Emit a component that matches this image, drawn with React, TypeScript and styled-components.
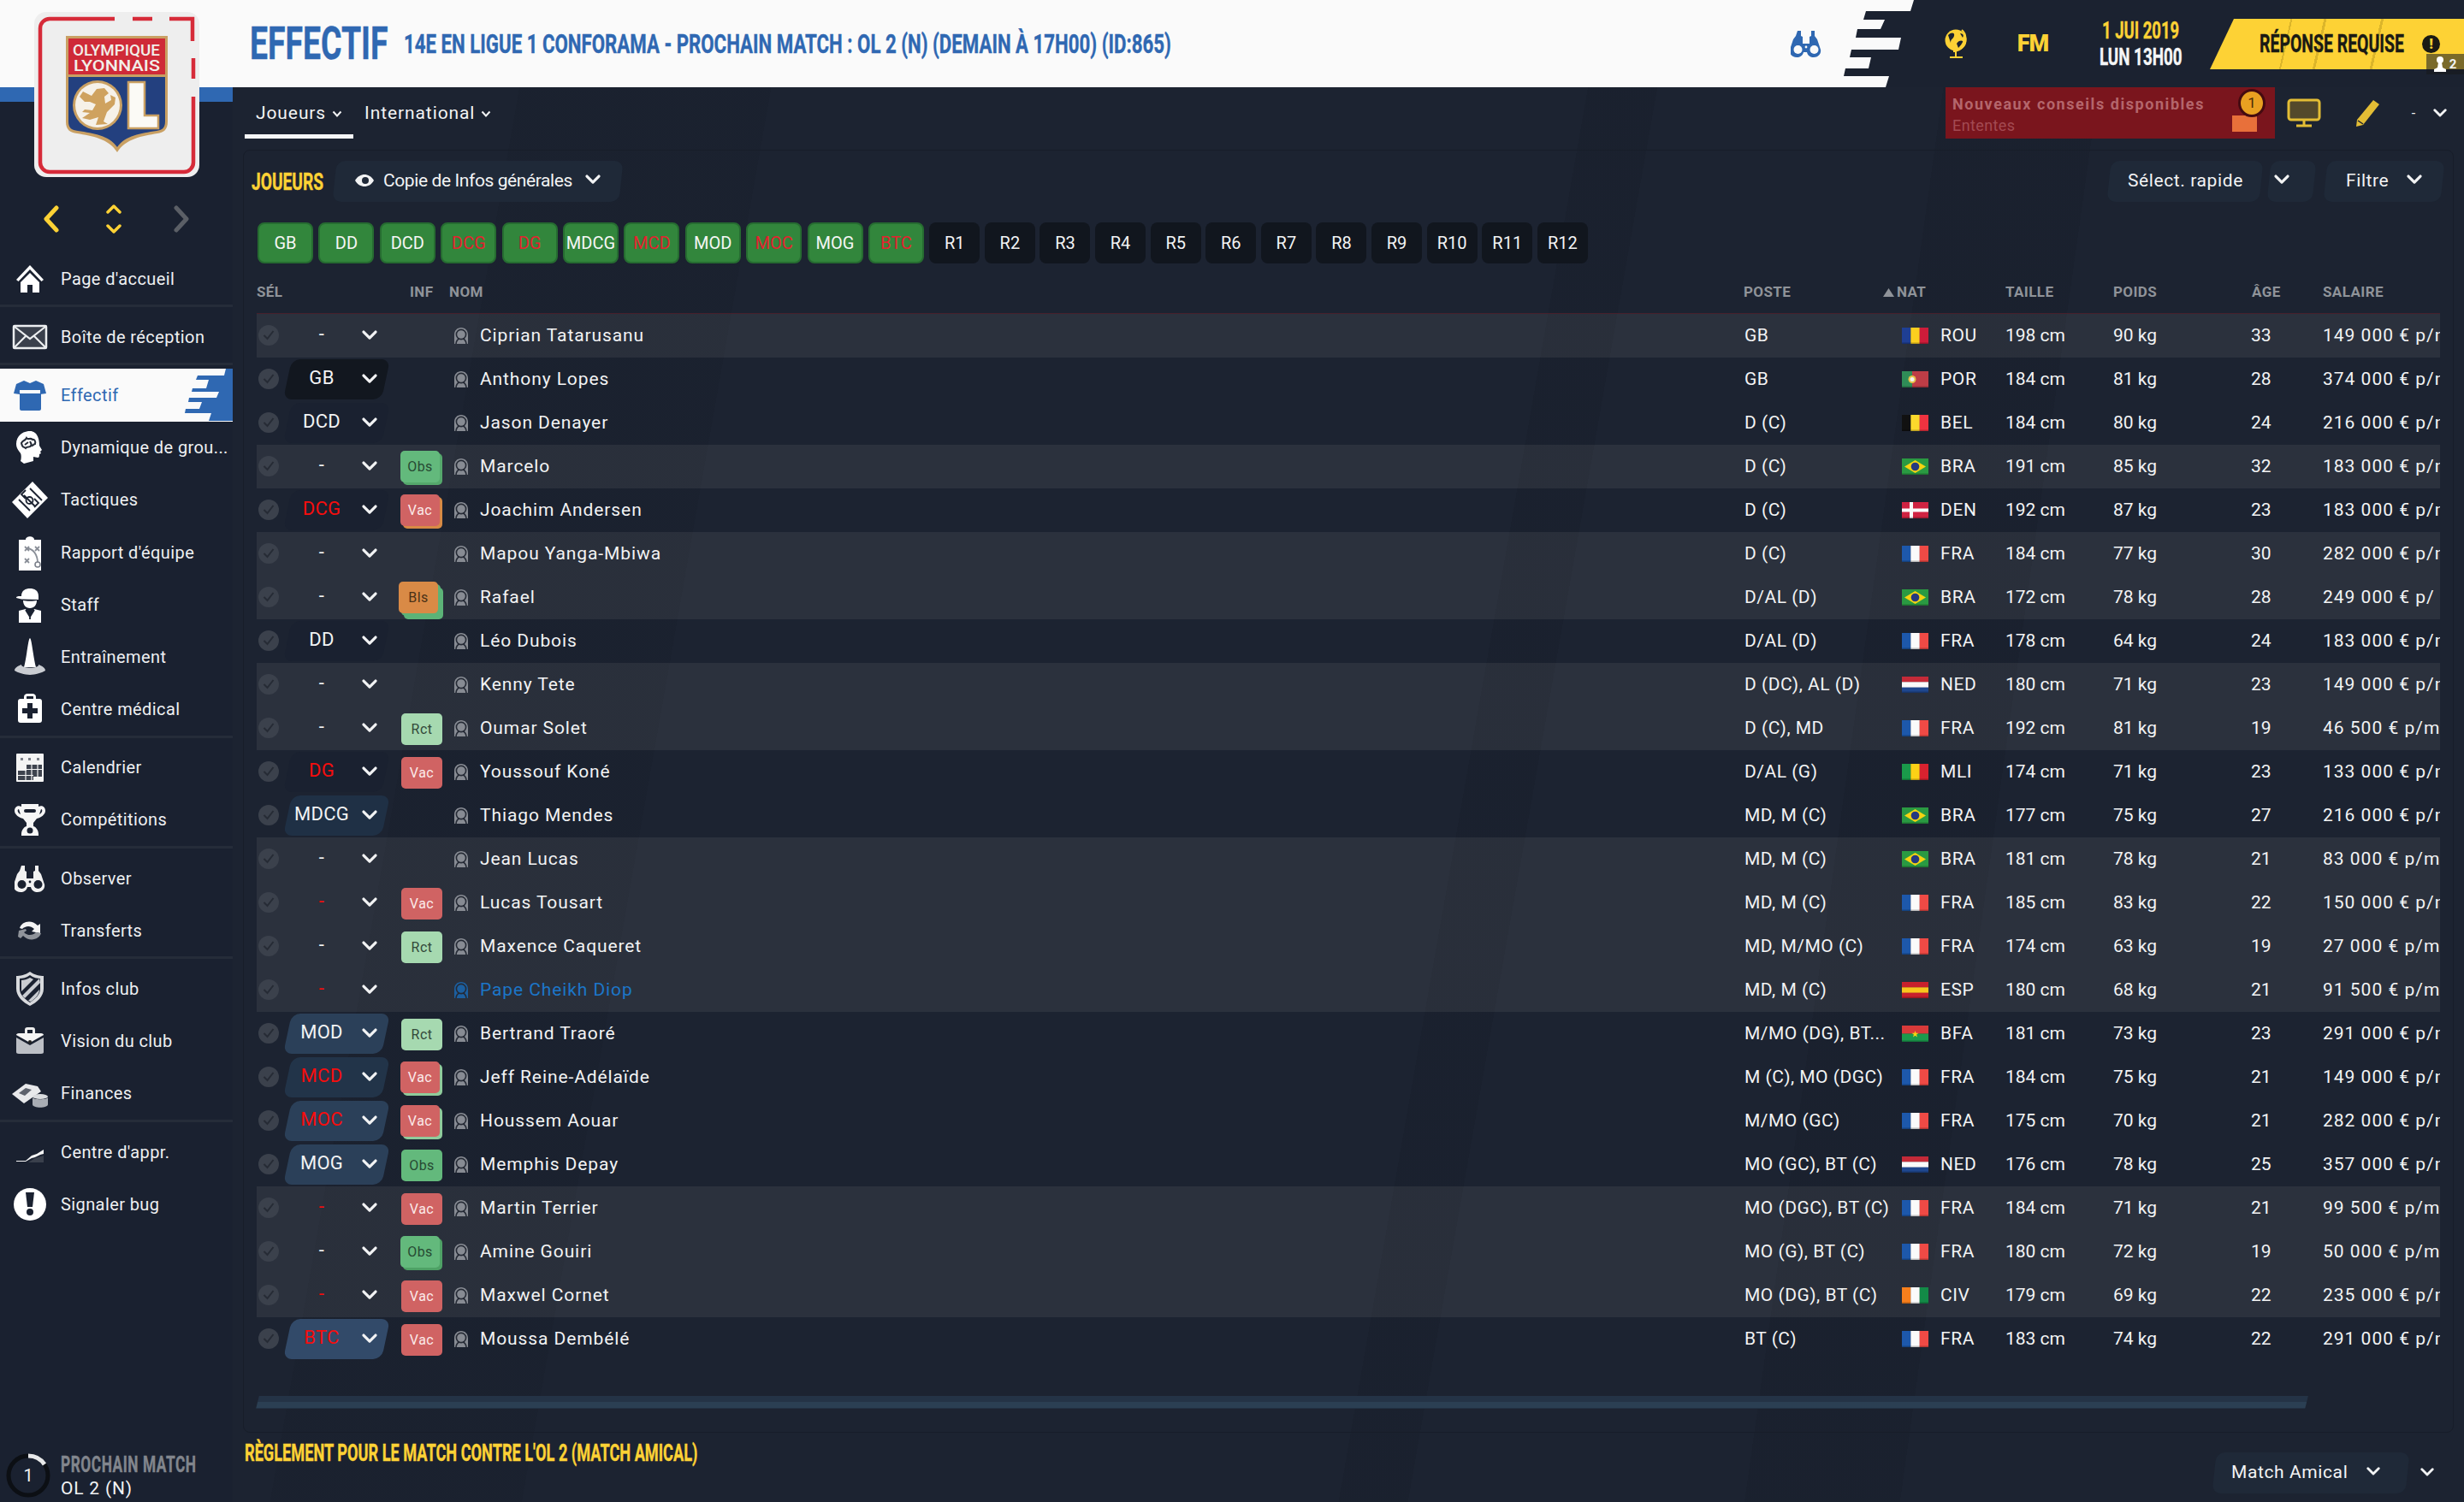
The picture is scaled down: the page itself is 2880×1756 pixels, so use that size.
import React from "react";
import styled, { createGlobalStyle, css } from "styled-components";

const GlobalStyle = createGlobalStyle`
  html, body { margin: 0; padding: 0; background: #1b2230; }
  body { font-family: Roboto, "Liberation Sans", sans-serif; color: #f2f3f4; }
  * { box-sizing: border-box; }
`;

type Player = {
  sel: string;
  selRed?: boolean;
  pill?: string;
  badge?: "Obs" | "Vac" | "Rct" | "Bls";
  stack?: string;
  name: string;
  poste: string;
  flag: string;
  code: string;
  taille: string;
  poids: string;
  age: string;
  salaire: string;
  light?: boolean;
  link?: boolean;
};

const faint = "#1a2130";
const players: Player[] = [
  { sel: "-", name: "Ciprian Tatarusanu", poste: "GB", flag: "ROU", code: "ROU", taille: "198 cm", poids: "90 kg", age: "33", salaire: "149 000 € p/m", light: true },
  { sel: "GB", pill: "#12171f", name: "Anthony Lopes", poste: "GB", flag: "POR", code: "POR", taille: "184 cm", poids: "81 kg", age: "28", salaire: "374 000 € p/m" },
  { sel: "DCD", pill: faint, name: "Jason Denayer", poste: "D (C)", flag: "BEL", code: "BEL", taille: "184 cm", poids: "80 kg", age: "24", salaire: "216 000 € p/m" },
  { sel: "-", badge: "Obs", stack: "#55a86c", name: "Marcelo", poste: "D (C)", flag: "BRA", code: "BRA", taille: "191 cm", poids: "85 kg", age: "32", salaire: "183 000 € p/m", light: true },
  { sel: "DCG", selRed: true, pill: faint, badge: "Vac", stack: "#d88a45", name: "Joachim Andersen", poste: "D (C)", flag: "DEN", code: "DEN", taille: "192 cm", poids: "87 kg", age: "23", salaire: "183 000 € p/m" },
  { sel: "-", name: "Mapou Yanga-Mbiwa", poste: "D (C)", flag: "FRA", code: "FRA", taille: "184 cm", poids: "77 kg", age: "30", salaire: "282 000 € p/m", light: true },
  { sel: "-", badge: "Bls", stack: "#5cb377", name: "Rafael", poste: "D/AL (D)", flag: "BRA", code: "BRA", taille: "172 cm", poids: "78 kg", age: "28", salaire: "249 000 € p/", light: true },
  { sel: "DD", pill: faint, name: "Léo Dubois", poste: "D/AL (D)", flag: "FRA", code: "FRA", taille: "178 cm", poids: "64 kg", age: "24", salaire: "183 000 € p/m" },
  { sel: "-", name: "Kenny Tete", poste: "D (DC), AL (D)", flag: "NED", code: "NED", taille: "180 cm", poids: "71 kg", age: "23", salaire: "149 000 € p/m", light: true },
  { sel: "-", badge: "Rct", name: "Oumar Solet", poste: "D (C), MD", flag: "FRA", code: "FRA", taille: "192 cm", poids: "81 kg", age: "19", salaire: "46 500 € p/m", light: true },
  { sel: "DG", selRed: true, pill: faint, badge: "Vac", name: "Youssouf Koné", poste: "D/AL (G)", flag: "MLI", code: "MLI", taille: "174 cm", poids: "71 kg", age: "23", salaire: "133 000 € p/m" },
  { sel: "MDCG", pill: "#1f3045", name: "Thiago Mendes", poste: "MD, M (C)", flag: "BRA", code: "BRA", taille: "177 cm", poids: "75 kg", age: "27", salaire: "216 000 € p/m" },
  { sel: "-", name: "Jean Lucas", poste: "MD, M (C)", flag: "BRA", code: "BRA", taille: "181 cm", poids: "78 kg", age: "21", salaire: "83 000 € p/m", light: true },
  { sel: "-", selRed: true, badge: "Vac", name: "Lucas Tousart", poste: "MD, M (C)", flag: "FRA", code: "FRA", taille: "185 cm", poids: "83 kg", age: "22", salaire: "150 000 € p/m", light: true },
  { sel: "-", badge: "Rct", name: "Maxence Caqueret", poste: "MD, M/MO (C)", flag: "FRA", code: "FRA", taille: "174 cm", poids: "63 kg", age: "19", salaire: "27 000 € p/m", light: true },
  { sel: "-", selRed: true, name: "Pape Cheikh Diop", link: true, poste: "MD, M (C)", flag: "ESP", code: "ESP", taille: "180 cm", poids: "68 kg", age: "21", salaire: "91 500 € p/m", light: true },
  { sel: "MOD", pill: "#2b4059", badge: "Rct", name: "Bertrand Traoré", poste: "M/MO (DG), BT...", flag: "BFA", code: "BFA", taille: "181 cm", poids: "73 kg", age: "23", salaire: "291 000 € p/m" },
  { sel: "MCD", selRed: true, pill: "#223449", badge: "Vac", stack: "#8fcb9b", name: "Jeff Reine-Adélaïde", poste: "M (C), MO (DGC)", flag: "FRA", code: "FRA", taille: "184 cm", poids: "75 kg", age: "21", salaire: "149 000 € p/m" },
  { sel: "MOC", selRed: true, pill: "#2b4059", badge: "Vac", stack: "#8fcb9b", name: "Houssem Aouar", poste: "M/MO (GC)", flag: "FRA", code: "FRA", taille: "175 cm", poids: "70 kg", age: "21", salaire: "282 000 € p/m" },
  { sel: "MOG", pill: "#2b4059", badge: "Obs", name: "Memphis Depay", poste: "MO (GC), BT (C)", flag: "NED", code: "NED", taille: "176 cm", poids: "78 kg", age: "25", salaire: "357 000 € p/m" },
  { sel: "-", selRed: true, badge: "Vac", name: "Martin Terrier", poste: "MO (DGC), BT (C)", flag: "FRA", code: "FRA", taille: "184 cm", poids: "71 kg", age: "21", salaire: "99 500 € p/m", light: true },
  { sel: "-", badge: "Obs", stack: "#4ea165", name: "Amine Gouiri", poste: "MO (G), BT (C)", flag: "FRA", code: "FRA", taille: "180 cm", poids: "72 kg", age: "19", salaire: "50 000 € p/m", light: true },
  { sel: "-", selRed: true, badge: "Vac", name: "Maxwel Cornet", poste: "MO (DG), BT (C)", flag: "CIV", code: "CIV", taille: "179 cm", poids: "69 kg", age: "22", salaire: "235 000 € p/m", light: true },
  { sel: "BTC", selRed: true, pill: "#324a69", badge: "Vac", name: "Moussa Dembélé", poste: "BT (C)", flag: "FRA", code: "FRA", taille: "183 cm", poids: "74 kg", age: "22", salaire: "291 000 € p/m" },
];

const chips: [string, boolean][] = [
  ["GB", false], ["DD", false], ["DCD", false], ["DCG", true], ["DG", true], ["MDCG", false],
  ["MCD", true], ["MOD", false], ["MOC", true], ["MOG", false], ["BTC", true],
];
const roles = ["R1", "R2", "R3", "R4", "R5", "R6", "R7", "R8", "R9", "R10", "R11", "R12"];

const badgeColors = {
  Obs: { bg: "#63b97c", fg: "#274a33" },
  Vac: { bg: "#d06363", fg: "#fbeaea" },
  Rct: { bg: "#a6d9b0", fg: "#33493a" },
  Bls: { bg: "#d98a46", fg: "#4a3116" },
};

/* ---------- layout ---------- */

const Page = styled.div`
  position: relative;
  width: 2880px;
  height: 1756px;
  overflow: hidden;
  display: grid;
  grid-template-rows: 102px 1fr;
  background-color: #1b2230;
`;

const Header = styled.header`
  display: flex;
  background: #1b2230;
`;

const TitleArea = styled.div`
  width: 2237px;
  flex: none;
  background: #fafafa;
  display: flex;
  align-items: center;
  padding-left: 292px;
  padding-right: 108px;
  clip-path: polygon(
    0 0, 2237px 0, 2233px 13px, 2181px 13px, 2178px 23px, 2203px 23px, 2198px 34px, 2171px 34px,
    2169px 44px, 2222px 44px, 2219px 58px, 2164px 58px, 2162px 67px, 2187px 67px, 2184px 80px,
    2157px 80px, 2155px 89px, 2208px 89px, 2204px 102px, 0 102px
  );
`;

const TitleGrid = styled.div`
  display: grid;
  grid-template-columns: 180px 1fr;
  align-items: center;
  flex: 1;
`;

const Narrow = styled.span<{ $size: number; $scale: number; $color: string }>`
  display: inline-block;
  white-space: nowrap;
  font-family: "Liberation Sans Narrow", Roboto, sans-serif;
  font-weight: 700;
  font-size: ${(p) => p.$size}px;
  line-height: 1;
  color: ${(p) => p.$color};
  -webkit-text-stroke: 0.4px ${(p) => p.$color};
  transform: scaleX(${(p) => p.$scale});
  transform-origin: left center;
`;

const HeaderRight = styled.div`
  flex: 1;
  display: flex;
  align-items: center;
  position: relative;
`;

const Globe = styled.div`
  width: 36px;
  height: 36px;
  margin-left: 32px;
`;

const FmMark = styled.div`
  width: 44px;
  margin-left: 49px;
  font-family: Roboto, sans-serif;
  font-weight: 900;
  font-size: 27px;
  color: #fdd235;
  text-align: center;
  letter-spacing: -1px;
`;

const DateBox = styled.div`
  width: 120px;
  margin-left: 47px;
  display: flex;
  flex-direction: column;
  align-items: flex-start;
  gap: 4px;
  padding-left: 12px;
  padding-top: 2px;
`;

const TimeLine = styled(Narrow)`
  margin-left: -3px;
`;

const Banner = styled.div`
  position: absolute;
  left: 346px;
  top: 22px;
  width: 297px;
  height: 59px;
  padding-left: 58px;
  display: flex;
  align-items: center;
  clip-path: polygon(28px 0, 100% 0, 100% 100%, 0 100%);
  background:
    linear-gradient(103deg, transparent 92px, rgba(120, 95, 10, 0.25) 92px, rgba(120, 95, 10, 0.25) 94px, transparent 94px,
      transparent 130px, rgba(120, 95, 10, 0.25) 130px, rgba(120, 95, 10, 0.25) 133px, transparent 133px,
      transparent 195px, rgba(120, 95, 10, 0.25) 195px, rgba(120, 95, 10, 0.25) 198px, transparent 198px),
    #fdd235;
`;

const AlertDot = styled.span`
  position: absolute;
  left: 248px;
  top: 19px;
  width: 21px;
  height: 21px;
  border-radius: 50%;
  background: #1a1a14;
  color: #fdd235;
  font-weight: 900;
  font-size: 17px;
  line-height: 21px;
  text-align: center;
`;

const SquadCount = styled.div`
  position: absolute;
  right: 0;
  top: 63px;
  width: 44px;
  height: 24px;
  display: flex;
  align-items: center;
  justify-content: center;
  gap: 4px;
  background: linear-gradient(#7a6a2a 0, #7a6a2a 18px, #181c24 18px);
  font-size: 15px;
  font-weight: 700;
`;

const LogoWrap = styled.div`
  position: absolute;
  left: 30px;
  top: 10px;
  width: 210px;
  height: 200px;
`;

const Body = styled.div`
  display: grid;
  grid-template-columns: 272px 1fr;
  min-height: 0;
`;

const Side = styled.aside`
  display: flex;
  flex-direction: column;
  background: #1a2130;
`;

const BlueStrip = styled.div`
  height: 17px;
  background: #2f68b2;
`;

const ArrowRow = styled.div`
  height: 40px;
  margin-top: 117px;
  display: flex;
  align-items: center;
`;

const ArrowCell = styled.div<{ $w: number }>`
  width: ${(p) => p.$w}px;
  flex: none;
  display: flex;
  justify-content: center;
`;

const Nav = styled.nav`
  margin-top: 19px;
`;

const NavGroup = styled.div<{ $sep?: boolean }>`
  margin-bottom: ${(p) => (p.$sep ? "4px" : "0")};
  border-bottom: ${(p) => (p.$sep ? "3px solid #252c39" : "0")};
`;

const NavItem = styled.div<{ $active?: boolean }>`
  position: relative;
  height: 61.2px;
  display: flex;
  align-items: center;
  font-size: 20px;
  letter-spacing: 0.4px;
  white-space: nowrap;
  background: ${(p) => (p.$active ? "#fafafa" : "transparent")};
  color: ${(p) => (p.$active ? "#2f68b2" : "#eef0f2")};
`;

const NavIcon = styled.span`
  width: 71px;
  flex: none;
  display: flex;
  justify-content: center;
  padding-right: 2px;
`;

const NavStripe = styled.svg`
  position: absolute;
  left: 0;
  top: 0;
`;

const NextMatch = styled.div`
  margin-top: auto;
  height: 62px;
  display: flex;
  align-items: center;
  position: relative;
`;

const MatchRing = styled.div`
  width: 71px;
  flex: none;
  display: flex;
  justify-content: center;
  padding-right: 6px;
`;

const MatchText = styled.div`
  display: flex;
  flex-direction: column;
  gap: 3px;
  font-size: 21px;
  letter-spacing: 0.8px;
`;

const Main = styled.main`
  display: flex;
  flex-direction: column;
  padding: 0 12px;
  min-width: 0;
  background:
    linear-gradient(100deg, transparent 1560px, rgba(10, 14, 22, 0.1) 1560px, rgba(10, 14, 22, 0.1) 1640px, transparent 1640px),
    linear-gradient(98deg, transparent 1980px, rgba(10, 14, 22, 0.1) 1980px, rgba(10, 14, 22, 0.1) 2160px, transparent 2160px),
    linear-gradient(100deg, transparent 330px, rgba(10, 14, 22, 0.08) 330px, rgba(10, 14, 22, 0.08) 620px, transparent 620px),
    #1c2331;
`;

const TopRow = styled.div`
  height: 73px;
  flex: none;
  display: flex;
  justify-content: space-between;
  align-items: flex-start;
`;

const Tabs = styled.div`
  display: flex;
  margin-left: 2px;
`;

const Tab = styled.div<{ $active?: boolean }>`
  height: 60px;
  padding: 18px 13px 0;
  display: flex;
  align-items: flex-start;
  gap: 7px;
  font-size: 21px;
  letter-spacing: 0.9px;
  border-bottom: 5px solid ${(p) => (p.$active ? "#f5f6f7" : "transparent")};
`;

const TopTools = styled.div`
  display: flex;
  align-items: flex-start;
`;

const Advice = styled.div`
  position: relative;
  width: 385px;
  height: 60px;
  background: #7a151d;
  padding: 9px 8px;
  display: flex;
  flex-direction: column;
  gap: 4px;
`;

const AdviceTitle = styled.div`
  font-weight: 700;
  font-size: 18px;
  letter-spacing: 1.55px;
  color: #b4666c;
`;

const AdviceSub = styled.div`
  font-size: 18px;
  letter-spacing: 0.4px;
  color: #a34a52;
`;

const AdviceIcon = styled.div`
  position: absolute;
  left: 335px;
  top: 33px;
  width: 29px;
  height: 19px;
  background: #e8703a;
`;

const AdviceBadge = styled.div`
  position: absolute;
  left: 342px;
  top: 2px;
  width: 32px;
  height: 33px;
  border-radius: 50%;
  border: 3px solid #450b10;
  background: #e9a021;
  color: #4b2a06;
  font-size: 17px;
  line-height: 26px;
  text-align: center;
`;

const ToolIcon = styled.div<{ $w: number }>`
  width: ${(p) => p.$w}px;
  height: 60px;
  display: flex;
  align-items: center;
  justify-content: center;
  flex: none;
`;

const Panel = styled.section`
  height: 1500px;
  flex: none;
  padding: 12px 15px 0;
  border: 1px solid #171d29;
  border-radius: 8px;
  display: flex;
  flex-direction: column;
`;

const Toolbar = styled.div`
  display: flex;
  justify-content: space-between;
  height: 48px;
  flex: none;
  margin: 0 -3px 0 -6px;
`;

const ToolGroup = styled.div`
  display: flex;
  align-items: center;
`;

const LabelSlot = styled.div`
  width: 97px;
  padding-top: 3px;
`;

const skewBg = css`
  position: relative;
  z-index: 0;
  &::before {
    content: "";
    position: absolute;
    inset: 0;
    z-index: -1;
    background: #1f2938;
    border-radius: 10px;
    transform: skewX(-6deg);
  }
`;

const DropDown = styled.div<{ $w: number; $pad: number; $padEnd?: number; $tight?: boolean; $start?: boolean }>`
  ${skewBg}
  width: ${(p) => p.$w}px;
  height: 48px;
  padding: 0 ${(p) => p.$padEnd ?? p.$pad}px 3px ${(p) => p.$pad}px;
  display: flex;
  align-items: center;
  justify-content: ${(p) => (p.$start ? "flex-start" : "space-between")};
  font-size: 21px;
  letter-spacing: ${(p) => (p.$tight ? "-0.4px" : "0.6px")};
  white-space: nowrap;
`;

const EyeText = styled.span`
  display: flex;
  align-items: center;
  gap: 11px;
`;

const ChipRow = styled.div`
  display: flex;
  margin: 24px 0 0 1px;
  height: 48px;
  flex: none;
`;

const Chip = styled.div<{ $red?: boolean }>`
  width: 65px;
  height: 48px;
  margin-right: 6.4px;
  display: flex;
  align-items: center;
  justify-content: center;
  background: #32863c;
  border: 2px solid #266c31;
  border-radius: 8px;
  font-size: 20px;
  color: ${(p) => (p.$red ? "#e4222f" : "#f5f6f5")};
`;

const RoleChip = styled.div`
  width: 59px;
  height: 48px;
  margin-right: 5.6px;
  display: flex;
  align-items: center;
  justify-content: center;
  background: #11161e;
  border-radius: 8px;
  font-size: 20px;
`;

const HeadRow = styled.div`
  height: 49px;
  margin-top: 9px;
  padding-bottom: 1px;
  flex: none;
  display: grid;
  grid-template-columns: 179px 46px 1513px 163px 143px 126px 162px 83px 1fr;
  align-items: center;
  font-weight: 700;
  font-size: 17px;
  letter-spacing: 0.4px;
  color: #8f9399;
`;

const RowList = styled.div`
  border-top: 1px solid #47202c;
`;

const Row = styled.div<{ $light?: boolean }>`
  height: 51px;
  padding-bottom: 1px;
  display: grid;
  grid-template-columns: 31px 131px 68px 31px 1476px 186px 45px 76px 126px 161px 84px 1fr;
  align-items: center;
  font-size: 21px;
  background: ${(p) => (p.$light ? "rgba(255, 250, 235, 0.065)" : "transparent")};
`;

const Check = styled.span`
  width: 24px;
  height: 24px;
  margin-left: 2px;
  border-radius: 50%;
  background: #3b414c;
  display: flex;
  align-items: center;
  justify-content: center;
`;

const PosCell = styled.div<{ $pill?: string }>`
  position: relative;
  z-index: 0;
  width: 125px;
  height: 47px;
  display: flex;
  align-items: center;
  &::before {
    content: "";
    position: absolute;
    top: 0;
    bottom: 0;
    left: 5px;
    right: 5px;
    z-index: -1;
    border-radius: 10px;
    transform: skewX(-12deg);
    background: ${(p) => p.$pill || "transparent"};
  }
`;

const PosText = styled.span<{ $red?: boolean }>`
  width: 90px;
  text-align: center;
  margin-top: -3px;
  font-size: 22px;
  letter-spacing: 0.3px;
  color: ${(p) => (p.$red ? "#f60d0d" : "#f2f3f4")};
`;

const PosChevron = styled.span`
  margin-left: 2px;
  width: 18px;
  display: flex;
`;

const Badge = styled.div<{ $kind: keyof typeof badgeColors; $stack?: string; $double?: boolean }>`
  width: ${(p) => (p.$stack ? "46px" : "48px")};
  height: 37px;
  margin-left: ${(p) => (p.$double ? "4px" : p.$stack ? "6px" : "7px")};
  margin-top: ${(p) => (p.$stack ? "0" : "3px")};
  border-radius: 5px;
  display: flex;
  align-items: center;
  justify-content: center;
  font-size: 16px;
  letter-spacing: 0.5px;
  background: ${(p) => badgeColors[p.$kind].bg};
  color: ${(p) => badgeColors[p.$kind].fg};
  box-shadow: ${(p) =>
    p.$double
      ? `3px 3px 0 ${p.$stack}, 6px 7px 0 ${p.$stack}`
      : p.$stack
        ? `3px 3px 0 ${p.$stack}`
        : "none"};
`;

const Name = styled.span<{ $link?: boolean }>`
  letter-spacing: 0.9px;
  color: ${(p) => (p.$link ? "#1c76c8" : "#f2f3f4")};
`;

const Cell = styled.span<{ $indent?: number; $spacing?: number }>`
  padding-left: ${(p) => p.$indent || 0}px;
  letter-spacing: ${(p) => p.$spacing || 0}px;
  white-space: nowrap;
  overflow: hidden;
`;

const FlagBox = styled.svg`
  display: block;
`;

const ScrollTrack = styled.div`
  height: 15px;
  flex: none;
  margin: 41px 156px 0 1px;
  transform: skewX(-14deg);
  background: linear-gradient(#243346 0, #243346 7px, #2b3f53 7px, #2b3f53 14px, #223042 14px);
`;

const RuleRow = styled.div`
  flex: 1;
  display: flex;
  justify-content: space-between;
  align-items: flex-start;
  padding: 11px 23px 0 2px;
`;

const RuleRight = styled.div`
  display: flex;
  align-items: flex-start;
  margin-top: 12px;
  gap: 15px;
`;

const RuleChevron = styled.div`
  margin-top: 14px;
`;

/* ---------- drawings ---------- */

const Chevron: React.FC<{ size?: number; color?: string }> = ({ size = 18, color = "#f2f3f4" }) => (
  <svg width={size} height={size * 0.67} viewBox="0 0 18 12">
    <path d="M2 2l7 7 7-7" fill="none" stroke={color} strokeWidth={3.2} strokeLinecap="round" strokeLinejoin="round" />
  </svg>
);

const SmallChevron: React.FC = () => (
  <svg width="12" height="9" viewBox="0 0 12 9" style={{ marginTop: 9 }}>
    <path d="M1.5 1.5l4.5 5 4.5-5" fill="none" stroke="#f2f3f4" strokeWidth={2} />
  </svg>
);

// hooded head: solid arch, dark ring round the head, dark slot between the legs
const Person: React.FC<{ color: string }> = ({ color }) => (
  <svg width="18" height="21" viewBox="0 0 18 21">
    <path d="M1 19.500V9.500C1 4.500 4.300 1 9 1s8 3.500 8 8.500v10c0 .5-.4.5-.8.5H1.800c-.4 0-.8 0-.8-.5z" fill={color} />
    <circle cx="9" cy="9" r="5.600" fill="none" stroke="#252a35" strokeWidth="1.600" />
    <path d="M3 20c.3-3.200 1.500-5 3.800-6M15 20c-.3-3.200-1.500-5-3.800-6" fill="none" stroke="#252a35" strokeWidth="1.600" />
  </svg>
);

const flagStripes: Record<string, { dir: "v" | "h"; colors: string[] }> = {
  ROU: { dir: "v", colors: ["#1f3f94", "#fbcf1f", "#ce1c3a"] },
  BEL: { dir: "v", colors: ["#111", "#fbd92c", "#ef3340"] },
  FRA: { dir: "v", colors: ["#1d58ab", "#fafafa", "#ef4a45"] },
  MLI: { dir: "v", colors: ["#1a9a4a", "#fcd116", "#d8222f"] },
  CIV: { dir: "v", colors: ["#f77f1c", "#fafafa", "#138a47"] },
  NED: { dir: "h", colors: ["#c42a38", "#fafafa", "#1f478f"] },
  ESP: { dir: "h", colors: ["#c8202c", "#f9c51d", "#c8202c"] },
  BFA: { dir: "h", colors: ["#d83a3a", "#1b9a4c"] },
};

const Flag: React.FC<{ code: string }> = ({ code }) => {
  const s = flagStripes[code];
  return (
    <FlagBox width="31" height="19" viewBox="0 0 31 19">
      {s &&
        s.colors.map((c, i) =>
          s.dir === "v" ? (
            <rect key={i} x={(i * 31) / s.colors.length} y="0" width={31 / s.colors.length + 0.2} height="19" fill={c} />
          ) : (
            <rect key={i} x="0" y={(i * 19) / s.colors.length} width="31" height={19 / s.colors.length + 0.2} fill={c} />
          )
        )}
      {code === "POR" && (
        <>
          <rect width="12" height="19" fill="#2f8d57" />
          <rect x="12" width="19" height="19" fill="#bd3d46" />
          <circle cx="12" cy="9.500" r="4.500" fill="#e6c24a" />
          <circle cx="12" cy="9.500" r="2.500" fill="#f2f2f2" />
        </>
      )}
      {code === "BRA" && (
        <>
          <rect width="31" height="19" fill="#2a9a42" />
          <path d="M15.500 2L28 9.500 15.500 17 3 9.500z" fill="#f5d312" />
          <circle cx="15.500" cy="9.500" r="4.800" fill="#25397f" />
        </>
      )}
      {code === "DEN" && (
        <>
          <rect width="31" height="19" fill="#cf2342" />
          <rect x="9" width="4" height="19" fill="#fafafa" />
          <rect y="7.500" width="31" height="4" fill="#fafafa" />
        </>
      )}
      {code === "BFA" && <path d="M15.500 6l1 2.800h3l-2.400 1.800.9 2.900-2.500-1.800-2.500 1.800.9-2.900-2.400-1.800h3z" fill="#f5d312" />}
      <rect y="17.500" width="31" height="1.500" fill="rgba(0,0,0,0.25)" />
    </FlagBox>
  );
};

const Crest: React.FC = () => (
  <svg width="210" height="200" viewBox="0 0 210 200">
    <rect x="10" y="4" width="193" height="193" rx="14" fill="#eeeeee" />
    <g fill="none" stroke="#d62b39" strokeWidth="4.500">
      <path d="M195 38V12H168M148 12H125M104 12H28a11 11 0 0 0-11 11v157a11 11 0 0 0 11 11h157a11 11 0 0 0 11-11V103M196 82V58" />
    </g>
    <path d="M47 32h119v100c0 10-5 13-12 14-18 3-37 6-47 22-10-16-29-19-47-22-8-1-13-4-13-14z" fill="#c9a063" />
    <path d="M50 35h113v42H50z" fill="#cf2a38" />
    <path d="M50 80h113v52c0 8-4 10-10 11-19 3-36 5-46 19-10-14-27-16-46-19-7-1-11-3-11-11z" fill="#23407f" />
    <text x="55" y="55" fontFamily="Roboto, sans-serif" fontWeight="500" fontSize="18" fill="#f2efe9" textLength="102" lengthAdjust="spacingAndGlyphs">OLYMPIQUE</text>
    <text x="56" y="73" fontFamily="Roboto, sans-serif" fontWeight="500" fontSize="18" fill="#f2efe9" textLength="101" lengthAdjust="spacingAndGlyphs">LYONNAIS</text>
    <circle cx="84" cy="113" r="29" fill="#c9a063" />
    <circle cx="84" cy="113" r="26" fill="#f6f1e8" />
    <path d="M67 97l10 5 6-8 9-1 5 6-5 4 1 8 7-4-1-6 6 3-1 8-9 9-4 11 5 3-14 1 3-9-10 3-9-2 9-6-9-1 3-3 9 1 4-7-7-3-6 0-6-6z" fill="#cfa25f" />
    <path d="M120 86h19v39h16v15h-35z" fill="#fbfaf6" stroke="#c9a063" strokeWidth="2.500" />
  </svg>
);

const Binoculars: React.FC<{ color: string; w: number; h: number; lens?: string }> = ({ color, w, h, lens = "#fafafa" }) => (
  <svg width={w} height={h} viewBox="0 0 36 32">
    <path d="M8 1h4v6l2 1v8h8V8l2-1V1h4v6l3 4 4 12c1 5-3 9-8 9-4 0-7-2-8-6h-4c-1 4-4 6-8 6-5 0-9-4-8-9l4-12 3-4z" fill={color} />
    <circle cx="8.500" cy="23" r="5" fill={lens} />
    <circle cx="27.500" cy="23" r="5" fill={lens} />
    <circle cx="18" cy="20" r="1.400" fill={lens} />
  </svg>
);

const IconSvg: React.FC<{ children: React.ReactNode }> = ({ children }) => (
  <svg width="48" height="48" viewBox="0 0 48 48">{children}</svg>
);

const navIcons: Record<string, React.ReactNode> = {
  home: (
    <IconSvg>
      <path d="M24 8L8 25l2.500 2L24 13l13.500 14 2.500-2z" fill="#fff" />
      <path d="M13 28l11-11 11 11v12h-8v-9h-6v9h-8z" fill="#fff" />
    </IconSvg>
  ),
  mail: (
    <IconSvg>
      <rect x="5" y="11" width="38" height="26" rx="1" fill="#3a404c" stroke="#eceef0" strokeWidth="2.500" />
      <path d="M6 12l18 14 18-14M6 36l13-13M42 36L29 23" fill="none" stroke="#eceef0" strokeWidth="2.200" />
    </IconSvg>
  ),
  shirt: (
    <IconSvg>
      <path d="M17 7l7 3 7-3 9 4 3 11-7 1v-5H12v5l-7-1 3-11z" fill="#2f68b2" />
      <path d="M12 22h25v18c0 1-1 2-2 2H14c-1 0-2-1-2-2z" fill="#2f68b2" />
    </IconSvg>
  ),
  brain: (
    <IconSvg>
      <path d="M24 5c-9 0-16 6-16 15 0 5 3 8 5 11 1 2 1 6 0 9l4 3 11-3v-5l5 1c2 0 2-2 2-4l2-1-1-2 2-2-3-5c0-9-3-17-11-17z" fill="#fff" />
      <path d="M14 19c2-4 4-2 6-6 2 3 4-1 7 2 2-1 4 2 3 5-2 0-2 3-5 2-1 3-4 0-6 3-2-2-4 0-5-6zM18 21l4-3M24 17l2 4" fill="none" stroke="#262c38" strokeWidth="2" />
    </IconSvg>
  ),
  board: (
    <IconSvg>
      <path d="M27 3l18 19-24 24L3 27z" fill="#fff" />
      <path d="M24 11l14 14M11 24l13 13M17 19l13 13M19 13l-5 5 5 5M29 33l5-5-5-5" fill="none" stroke="#1a2130" strokeWidth="1.800" />
      <circle cx="23.500" cy="25" r="4" fill="none" stroke="#1a2130" strokeWidth="1.800" />
    </IconSvg>
  ),
  clipboard: (
    <IconSvg>
      <path d="M11 9h8c0-5 10-5 10 0h8v36H11z" fill="#fff" />
      <path d="M18 17l5 5M23 17l-5 5M30 17l5 5M35 17l-5 5M18 31l5 5M23 31l-5 5M20 19c8 0 13 8 13 17" fill="none" stroke="#8a8f98" strokeWidth="1.800" />
      <circle cx="33" cy="38" r="3" fill="#fff" stroke="#7c818b" strokeWidth="1.600" />
    </IconSvg>
  ),
  staff: (
    <IconSvg>
      <path d="M14 14c0-7 5-9 10-9s10 2 10 9v4l-20-.5-6-1.500c0-2 3-2 6-2z" fill="#fff" />
      <path d="M16 19c3 1 13 1 16 0 0 5-3 9-8 9s-8-4-8-9z" fill="#fff" />
      <path d="M11 31l8-2 5 9 5-9 8 2v14H11z" fill="#fff" />
      <path d="M19 30l5 8 5-8M24 38v3" fill="none" stroke="#1a2130" strokeWidth="1.800" />
    </IconSvg>
  ),
  cone: (
    <IconSvg>
      <path d="M24 2c2 0 4 24 7 34H17C20 26 22 2 24 2z" fill="#fff" />
      <path d="M14 33C9 35 6 37 6 40c3 2 12 5 18 5s15-3 18-5c0-3-3-5-8-7 1 5-20 5-20 0z" fill="#c9ccd1" />
    </IconSvg>
  ),
  medic: (
    <IconSvg>
      <path d="M17 13v-3c0-3 2-4 4-4h6c2 0 4 1 4 4v3h-3v-3c0-1 0-1-1-1h-6c-1 0-1 0-1 1v3z" fill="#fff" />
      <rect x="10" y="12" width="28" height="28" rx="3" fill="#fff" />
      <path d="M21 17h6v6h6v6h-6v6h-6v-6h-6v-6h6z" fill="#1a2130" />
    </IconSvg>
  ),
  calendar: (
    <IconSvg>
      <rect x="8" y="8" width="32" height="33" rx="1" fill="#f4f4f4" />
      <path d="M13 13h3v3h-3zM22 13h3v3h-3zM32 13h3v3h-3z" fill="#7d818a" />
      <path d="M20 21h18v5H20zM20 27h18v5H20zM10 28h28v7H10z" fill="#3e434e" />
      <path d="M10 34h18v5H10z" fill="#3e434e" />
      <path d="M10 33.500h18M19 21v18M26 21v18M33 21v14" stroke="#f4f4f4" strokeWidth="1.200" />
    </IconSvg>
  ),
  trophy: (
    <IconSvg>
      <path d="M14 6h20v3c5-2 8 1 8 5s-5 8-10 9l-4 5v4c2 0 6 4 6 9v2H14v-2c0-5 4-9 6-9v-4l-4-5C11 22 6 18 6 14s3-7 8-5z" fill="#f6f6f6" />
      <path d="M11 12c-2 0-2 4 2 6zM37 12c2 0 2 4-2 6z" fill="#1a2130" />
      <rect x="17" y="12" width="14" height="4" rx="2" fill="#1a2130" />
      <circle cx="24" cy="37" r="3.500" fill="#1a2130" />
    </IconSvg>
  ),
  binoculars: <Binoculars color="#f2f2f2" w={36} h={32} lens="#1a2130" />,
  sync: (
    <IconSvg>
      <path d="M12 21c2-7 13-11 21-3l3-2v11l-10-2 3-3c-5-5-11-3-14 0z" fill="#f4f4f4" />
      <path d="M37 27c-2 7-13 11-21 3l-3 3-3-2 1-7 8-2 1 2-3 2c5 5 11 3 14 0z" fill="#8f939a" />
    </IconSvg>
  ),
  shield: (
    <IconSvg>
      <path d="M24 4c5 4 12 5 16 5v15c0 9-8 16-16 20-8-4-16-11-16-20V9c4 0 11-1 16-5z" fill="#d8dadd" />
      <path d="M24 8c4 3 9 4 12 4v12c0 7-6 12-12 16-6-4-12-9-12-16V12c3 0 8-1 12-4z" fill="#1a2130" />
      <path d="M14 14c3 0 7-1 10-3l4 2-14 14zM15 32l20-20 1 5-18 18zM22 38l13-13c0 5-4 10-10 14z" fill="#c9ccd1" />
    </IconSvg>
  ),
  briefcase: (
    <IconSvg>
      <path d="M18 15v-4c0-2 1-3 3-3h6c2 0 3 1 3 3v4h-3v-4h-6v4z" fill="#eee" />
      <path d="M8 17c0-1 1-2 3-2h26c2 0 3 1 3 2l-16 9z" fill="#f4f4f4" />
      <path d="M8 20l16 9 16-9v17c0 1-1 2-3 2H11c-2 0-3-1-3-2z" fill="#bcbfc5" />
      <circle cx="24" cy="25" r="2" fill="#222" />
    </IconSvg>
  ),
  money: (
    <IconSvg>
      <path d="M3 25l16-12 14 3 4 6-20 14z" fill="#e8e9eb" />
      <path d="M11 24l8-6 7 2-8 7z" fill="#5d626c" />
      <ellipse cx="36" cy="28" rx="9" ry="3" fill="#d9dbde" />
      <path d="M27 29v8c0 5 18 5 18 0v-8c0 3-18 3-18 0z" fill="#a9adb4" />
    </IconSvg>
  ),
  graph: (
    <IconSvg>
      <path d="M8 34h11l7-6 6-2 8-5v5c-6 1-8 4-14 5l-7 4H8z" fill="#f4f4f4" />
      <path d="M12 36h10l8-5 10-3v8H12z" fill="#3a404c" />
    </IconSvg>
  ),
  bug: (
    <IconSvg>
      <circle cx="24" cy="24" r="19" fill="#fff" />
      <path d="M19 10h10l-2 17h-6z" fill="#1a2130" />
      <circle cx="24" cy="33" r="4" fill="#1a2130" />
    </IconSvg>
  ),
};

type NavEntry = { label: string; icon: string; active?: boolean };
const navGroups: NavEntry[][] = [
  [{ label: "Page d'accueil", icon: "home" }],
  [{ label: "Boîte de réception", icon: "mail" }],
  [
    { label: "Effectif", icon: "shirt", active: true },
    { label: "Dynamique de grou...", icon: "brain" },
    { label: "Tactiques", icon: "board" },
    { label: "Rapport d'équipe", icon: "clipboard" },
    { label: "Staff", icon: "staff" },
    { label: "Entraînement", icon: "cone" },
    { label: "Centre médical", icon: "medic" },
  ],
  [
    { label: "Calendrier", icon: "calendar" },
    { label: "Compétitions", icon: "trophy" },
  ],
  [
    { label: "Observer", icon: "binoculars" },
    { label: "Transferts", icon: "sync" },
  ],
  [
    { label: "Infos club", icon: "shield" },
    { label: "Vision du club", icon: "briefcase" },
    { label: "Finances", icon: "money" },
  ],
  [
    { label: "Centre d'appr.", icon: "graph" },
    { label: "Signaler bug", icon: "bug" },
  ],
];

const App: React.FC = () => {
  return (
    <Page>
      <GlobalStyle />
      <Header>
        <TitleArea>
          <TitleGrid>
            <Narrow $size={53} $scale={0.705} $color="#2f68b2">EFFECTIF</Narrow>
            <Narrow $size={32} $scale={0.695} $color="#2f68b2">
              14E EN LIGUE 1 CONFORAMA - PROCHAIN MATCH : OL 2 (N) (DEMAIN À 17H00) (ID:865)
            </Narrow>
          </TitleGrid>
          <Binoculars color="#2f68b2" w={36} h={32} />
        </TitleArea>
        <HeaderRight>
          <Globe>
            <svg width="36" height="36" viewBox="0 0 36 36">
              <circle cx="17" cy="14" r="12.500" fill="#fdd235" />
              <path d="M8 8c4-4 8-3 7 1s-4 3-4 8zM18 18c2-4 6-4 7-3s-3 6-5 8zM22 6c3 0 5 2 3 5z" fill="#1b2230" />
              <path d="M24 2c5 4 7 14 0 21-3 3-7 4-10 4M17 27v6M10 34h15" fill="none" stroke="#fdd235" strokeWidth="2" />
            </svg>
          </Globe>
          <FmMark>FM</FmMark>
          <DateBox>
            <Narrow $size={27} $scale={0.685} $color="#fdd235">1 JUI 2019</Narrow>
            <TimeLine $size={27} $scale={0.695} $color="#f5f6f7">LUN 13H00</TimeLine>
          </DateBox>
          <Banner>
            <Narrow $size={29} $scale={0.67} $color="#1a1a14">RÉPONSE REQUISE</Narrow>
            <AlertDot>!</AlertDot>
          </Banner>
          <SquadCount>
            <svg width="14" height="20" viewBox="0 0 14 20">
              <circle cx="7" cy="5" r="4" fill="#fff" />
              <path d="M5 8h4l1 6 4 2v3H0v-3l4-2z" fill="#fff" />
            </svg>
            2
          </SquadCount>
        </HeaderRight>
      </Header>

      <Body>
        <Side>
          <BlueStrip />
          <ArrowRow>
            <ArrowCell $w={120}>
              <svg width="20" height="32" viewBox="0 0 20 32">
                <path d="M16 3L4 16l12 13" fill="none" stroke="#fdd235" strokeWidth="5" strokeLinecap="round" strokeLinejoin="round" />
              </svg>
            </ArrowCell>
            <ArrowCell $w={26}>
              <svg width="18" height="34" viewBox="0 0 18 34">
                <path d="M2 9l7-7 7 7M2 25l7 7 7-7" fill="none" stroke="#fdd235" strokeWidth="3.500" strokeLinecap="round" strokeLinejoin="round" />
              </svg>
            </ArrowCell>
            <ArrowCell $w={132}>
              <svg width="20" height="32" viewBox="0 0 20 32">
                <path d="M4 3l12 13L4 29" fill="none" stroke="#5b5f66" strokeWidth="5" strokeLinecap="round" strokeLinejoin="round" />
              </svg>
            </ArrowCell>
          </ArrowRow>
          <Nav>
            {navGroups.map((group, gi) => (
              <NavGroup key={gi} $sep={gi < navGroups.length - 1}>
                {group.map((item) => (
                  <NavItem key={item.label} $active={item.active}>
                    <NavIcon>{navIcons[item.icon]}</NavIcon>
                    {item.label}
                    {item.active && (
                      <NavStripe width="272" height="61" viewBox="0 0 272 61">
                        <path d="M264 0l-2 8h-31l-2 5h15l-3 10h-16l-1 4h32l-3 7h-32l-1 5h16l-3 8h-16l-1 5h31l-3 9h28V0z" fill="#2f68b2" />
                      </NavStripe>
                    )}
                  </NavItem>
                ))}
              </NavGroup>
            ))}
          </Nav>
          <NextMatch>
            <MatchRing>
              <svg width="54" height="54" viewBox="0 0 54 54">
                <circle cx="27" cy="27" r="23" fill="none" stroke="#0c0f14" strokeWidth="5" />
                <path d="M27 4a23 23 0 0 1 19 10" fill="none" stroke="#e8e9ea" strokeWidth="5" />
                <text x="27" y="34" textAnchor="middle" fontFamily="Roboto, sans-serif" fontSize="20" fill="#f2f3f4">1</text>
              </svg>
            </MatchRing>
            <MatchText>
              <Narrow $size={26} $scale={0.666} $color="#82868d">PROCHAIN MATCH</Narrow>
              <span>OL 2 (N)</span>
            </MatchText>
          </NextMatch>
        </Side>

        <Main>
          <TopRow>
            <Tabs>
              <Tab $active>
                Joueurs
                <SmallChevron />
              </Tab>
              <Tab>
                International
                <SmallChevron />
              </Tab>
            </Tabs>
            <TopTools>
              <Advice>
                <AdviceTitle>Nouveaux conseils disponibles</AdviceTitle>
                <AdviceSub>Ententes</AdviceSub>
                <AdviceIcon />
                <AdviceBadge>1</AdviceBadge>
              </Advice>
              <ToolIcon $w={68}>
                <svg width="40" height="34" viewBox="0 0 40 34">
                  <rect x="2" y="2" width="36" height="23" rx="3" fill="#54492b" stroke="#e3bd35" strokeWidth="3" />
                  <path d="M20 25v6M11 32h18" stroke="#e3bd35" strokeWidth="3" />
                </svg>
              </ToolIcon>
              <ToolIcon $w={80}>
                <svg width="32" height="34" viewBox="0 0 32 34">
                  <path d="M23 2l7 5L11 31l-8 2 1-8z" fill="#e3bd35" />
                  <path d="M5 26l6 4" stroke="#1b2230" strokeWidth="1.500" />
                </svg>
              </ToolIcon>
              <ToolIcon $w={28}>-</ToolIcon>
              <ToolIcon $w={33}>
                <Chevron size={16} />
              </ToolIcon>
            </TopTools>
          </TopRow>

          <Panel>
            <Toolbar>
              <ToolGroup>
                <LabelSlot>
                  <Narrow $size={27} $scale={0.71} $color="#fdd235">JOUEURS</Narrow>
                </LabelSlot>
                <DropDown $w={335} $pad={24} $tight>
                  <EyeText>
                    <svg width="22" height="16" viewBox="0 0 22 16">
                      <path d="M0 8c3-5 7-7 11-7s8 2 11 7c-3 5-7 7-11 7S3 13 0 8z" fill="#f2f3f4" />
                      <circle cx="12" cy="8" r="4" fill="#1f2938" />
                    </svg>
                    Copie de Infos générales
                  </EyeText>
                  <Chevron />
                </DropDown>
              </ToolGroup>
              <ToolGroup>
                <DropDown $w={178} $pad={22}>Sélect. rapide</DropDown>
                <DropDown $w={53} $pad={6} $start style={{ marginLeft: 9 }}>
                  <Chevron />
                </DropDown>
                <DropDown $w={137} $pad={24} style={{ marginLeft: 13 }}>
                  Filtre
                  <Chevron />
                </DropDown>
              </ToolGroup>
            </Toolbar>

            <ChipRow>
              {chips.map(([label, red]) => (
                <Chip key={label} $red={red}>{label}</Chip>
              ))}
              {roles.map((r) => (
                <RoleChip key={r}>{r}</RoleChip>
              ))}
            </ChipRow>

            <HeadRow>
              <span>SÉL</span>
              <span>INF</span>
              <span>NOM</span>
              <span>POSTE</span>
              <span>
                <svg width="13" height="10" viewBox="0 0 13 10" style={{ marginRight: 3 }}>
                  <path d="M6.500 0L13 10H0z" fill="#8f9399" />
                </svg>
                NAT
              </span>
              <span>TAILLE</span>
              <span>POIDS</span>
              <span>ÂGE</span>
              <span>SALAIRE</span>
            </HeadRow>

            <RowList>
              {players.map((p) => (
                <Row key={p.name} $light={p.light}>
                  <Check>
                    <svg width="14" height="12" viewBox="0 0 14 12">
                      <path d="M1.500 6l4 4 7-9" fill="none" stroke="#262b35" strokeWidth="2" />
                    </svg>
                  </Check>
                  <PosCell $pill={p.pill}>
                    <PosText $red={p.selRed}>{p.sel}</PosText>
                    <PosChevron>
                      <Chevron />
                    </PosChevron>
                  </PosCell>
                  <div>
                    {p.badge && (
                      <Badge $kind={p.badge} $stack={p.stack} $double={p.badge === "Bls"}>
                        {p.badge}
                      </Badge>
                    )}
                  </div>
                  <Person color={p.link ? "#1c5f9f" : "#878b93"} />
                  <Name $link={p.link}>{p.name}</Name>
                  <Cell $indent={2} $spacing={0.5}>{p.poste}</Cell>
                  <Flag code={p.flag} />
                  <Cell $spacing={0.6}>{p.code}</Cell>
                  <Cell>{p.taille}</Cell>
                  <Cell>{p.poids}</Cell>
                  <Cell>{p.age}</Cell>
                  <Cell $spacing={1}>{p.salaire}</Cell>
                </Row>
              ))}
            </RowList>

            <ScrollTrack />
          </Panel>

          <RuleRow>
            <Narrow $size={27} $scale={0.673} $color="#fdd235">
              RÈGLEMENT POUR LE MATCH CONTRE L'OL 2 (MATCH AMICAL)
            </Narrow>
            <RuleRight>
              <DropDown $w={226} $pad={20} $padEnd={32}>
                Match Amical
                <Chevron size={16} />
              </DropDown>
              <RuleChevron>
                <Chevron size={16} />
              </RuleChevron>
            </RuleRight>
          </RuleRow>
        </Main>
      </Body>

      <LogoWrap>
        <Crest />
      </LogoWrap>
    </Page>
  );
};

export default App;
